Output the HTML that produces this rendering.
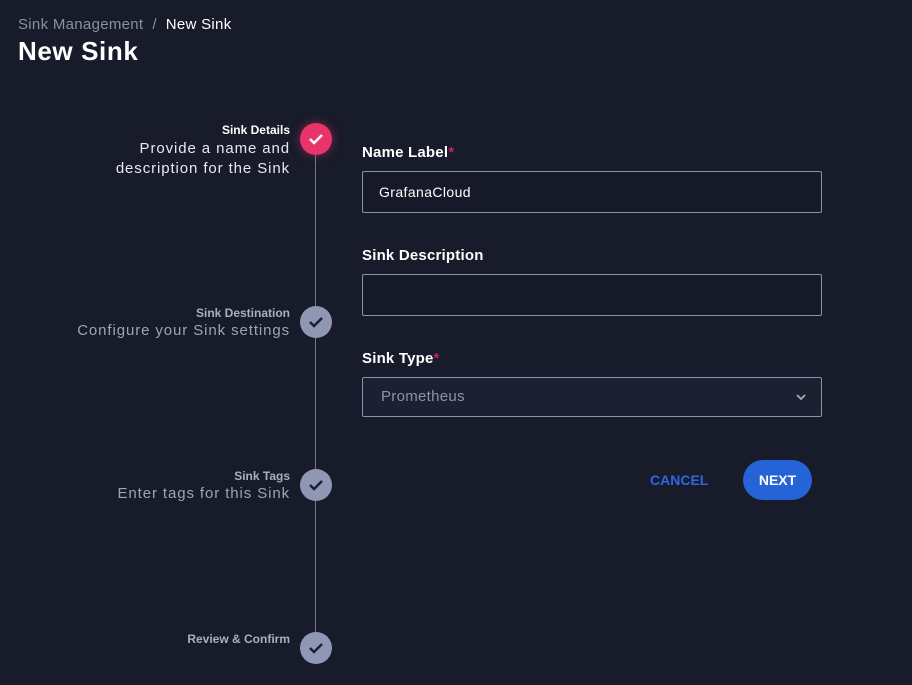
<!DOCTYPE html>
<html><head><style>
body{margin:0;width:912px;height:685px;background:#171b2a;font-family:"Liberation Sans",sans-serif;position:relative;overflow:hidden;color:#fff}
.a{position:absolute}
.r{text-align:right;right:622px}
.t{font-weight:bold;font-size:12px;color:#a9afc3}
.d{font-size:15px;color:#9ea4b6;letter-spacing:0.9px}
.c{position:absolute;left:300px;width:32px;height:32px;border-radius:50%;background:#8f97b5}
.c svg{position:absolute;left:8px;top:9px}
.lab{position:absolute;left:362px;font-weight:bold;font-size:15px;letter-spacing:0.2px}
.lab span{color:#c8245a}
.in{position:absolute;left:362px;width:458px;border:1px solid #8a93b3;border-radius:2px;background:#161a28}
</style></head><body>
<div class="a" style="left:18px;top:16px;font-size:15px;color:#8a90a3;letter-spacing:0.3px">Sink Management &nbsp;/ &nbsp;<span style="color:#fff">New Sink</span></div>
<div class="a" style="left:18px;top:36px;font-size:26px;font-weight:bold;letter-spacing:0.6px">New Sink</div>
<div class="a" style="left:315px;top:150px;width:1px;height:490px;background:#6f7690"></div>
<div class="a r t" style="top:123px;color:#fff">Sink Details</div>
<div class="a r d" style="top:139px;color:#e6e8ee;line-height:20px">Provide a name and<br>description for the Sink</div>
<div class="c" style="top:123px;background:#e8336b;box-shadow:0 0 10px #e8336b88"><svg width="16" height="14"><path d="M2 7l4 4 8-8" stroke="#fff" stroke-width="2.5" fill="none"/></svg></div>
<div class="a r t" style="top:306px">Sink Destination</div>
<div class="a r d" style="top:322px">Configure your Sink settings</div>
<div class="c" style="top:306px"><svg width="16" height="14"><path d="M2 7l4 4 8-8" stroke="#1c2030" stroke-width="2.5" fill="none"/></svg></div>
<div class="a r t" style="top:469px">Sink Tags</div>
<div class="a r d" style="top:485px">Enter tags for this Sink</div>
<div class="c" style="top:469px"><svg width="16" height="14"><path d="M2 7l4 4 8-8" stroke="#1c2030" stroke-width="2.5" fill="none"/></svg></div>
<div class="a r t" style="top:632px">Review &amp; Confirm</div>
<div class="c" style="top:632px"><svg width="16" height="14"><path d="M2 7l4 4 8-8" stroke="#1c2030" stroke-width="2.5" fill="none"/></svg></div>
<div class="lab" style="top:144px">Name Label<span>*</span></div>
<div class="in" style="top:171px;height:40px"><div class="a" style="left:16px;top:12px;font-size:14px;letter-spacing:0.4px">GrafanaCloud</div></div>
<div class="lab" style="top:247px">Sink Description</div>
<div class="in" style="top:274px;height:40px"></div>
<div class="lab" style="top:350px">Sink Type<span>*</span></div>
<div class="in" style="top:377px;height:38px;background:#1c2132"><div class="a" style="left:18px;top:10px;font-size:15px;color:#8d93a6;letter-spacing:0.3px">Prometheus</div>
<svg class="a" style="left:432px;top:14px" width="12" height="10"><path d="M2 3l4 4 4-4" stroke="#aab" stroke-width="1.8" fill="none"/></svg></div>
<div class="a" style="left:650px;top:472px;font-size:14px;font-weight:bold;color:#2f67e0">CANCEL</div>
<div class="a" style="left:743px;top:460px;width:69px;height:40px;border-radius:20px;background:#2563d6;font-size:14px;font-weight:bold;text-align:center;line-height:40px">NEXT</div>
</body></html>
